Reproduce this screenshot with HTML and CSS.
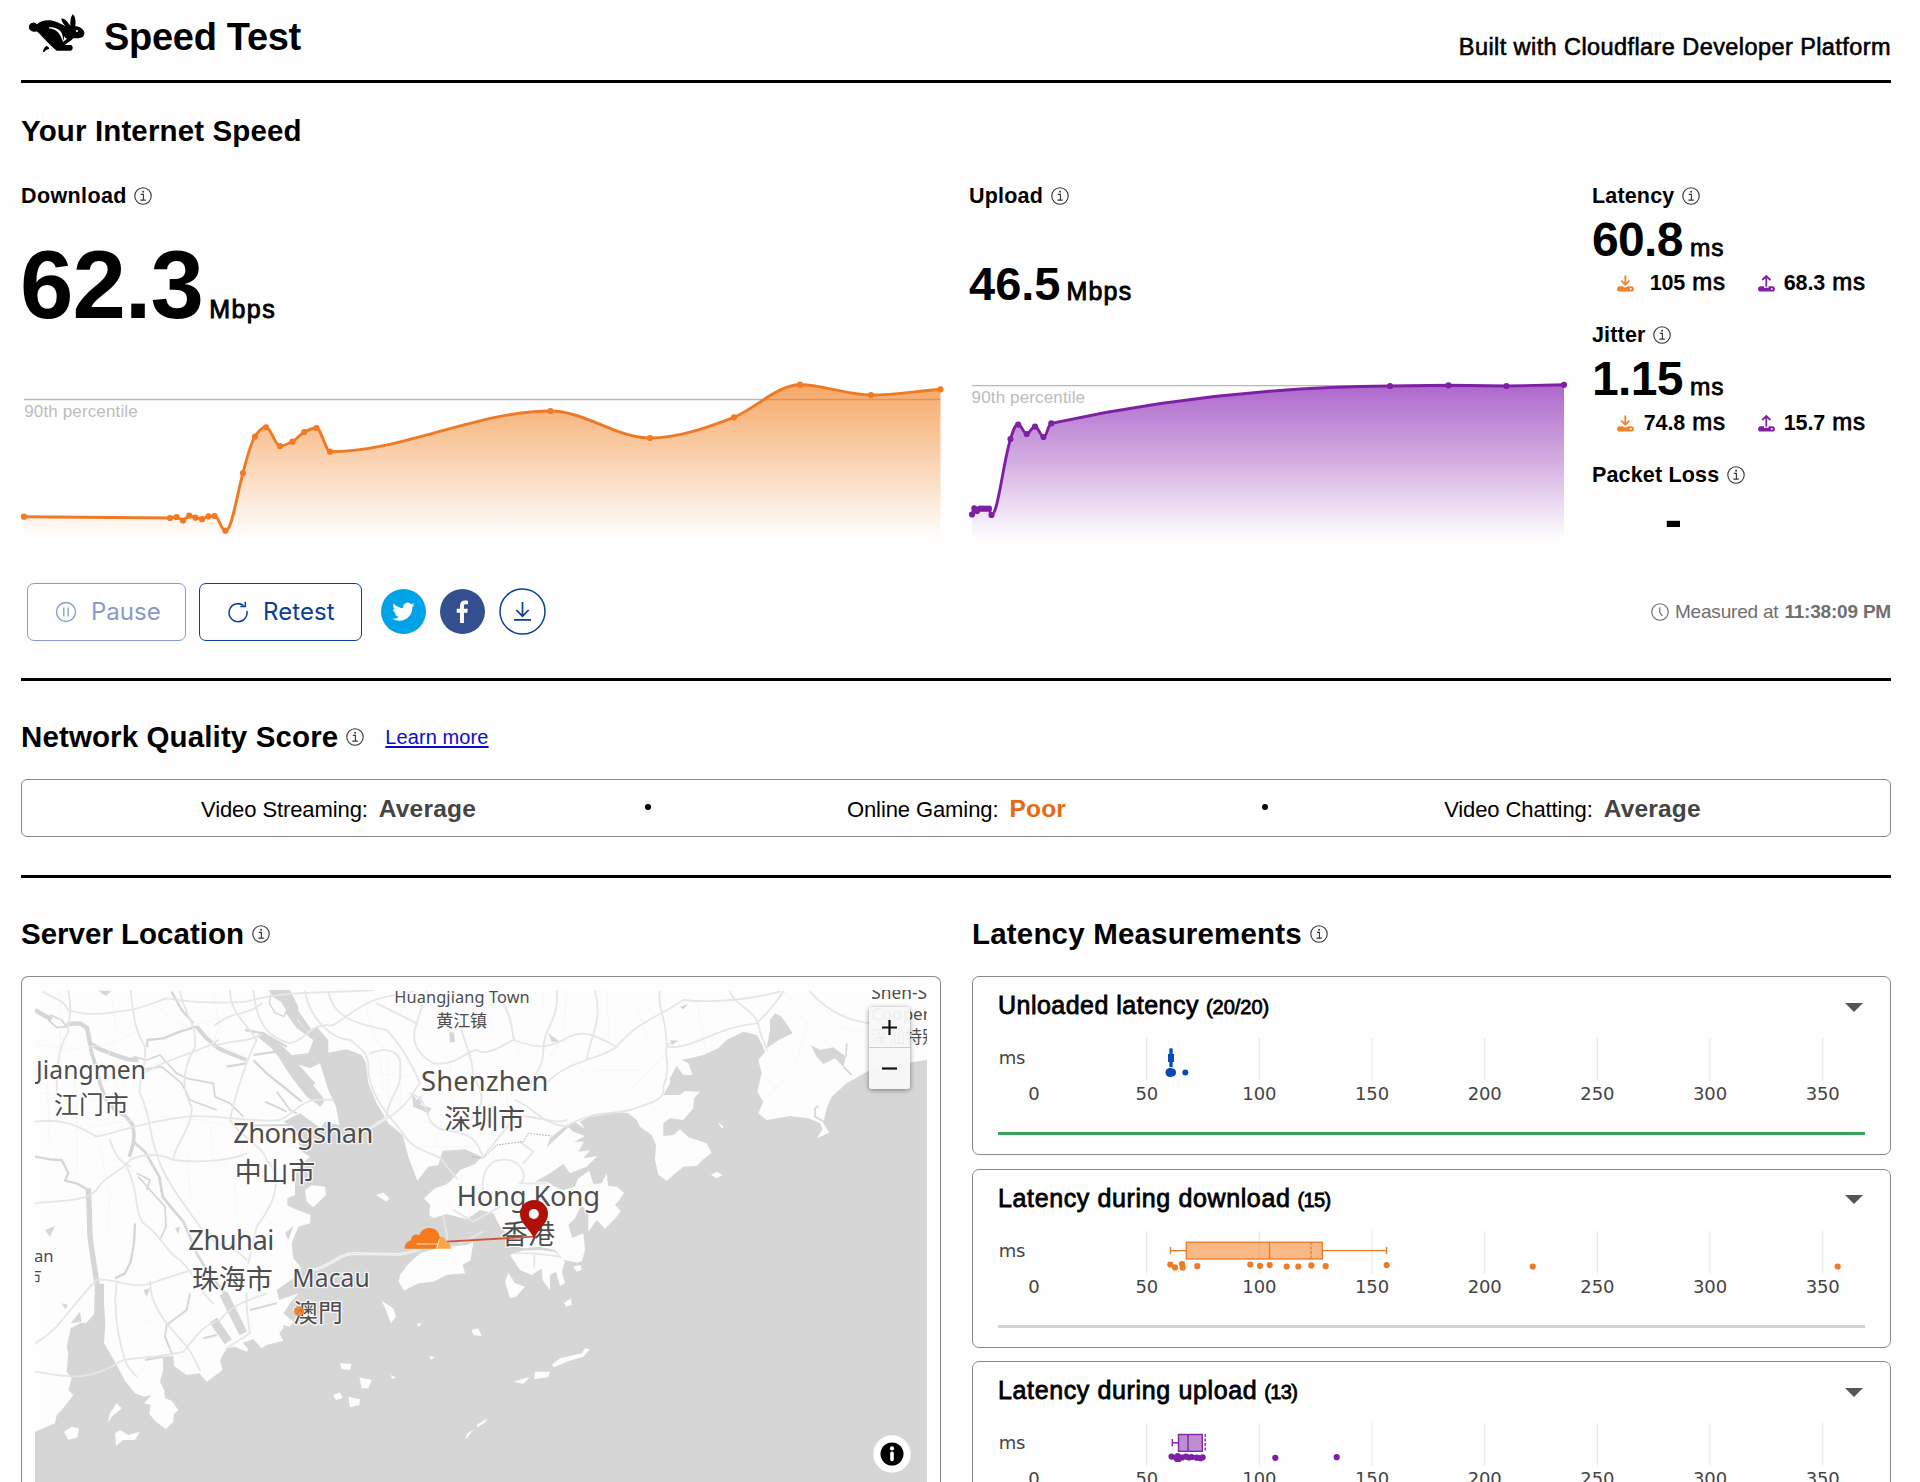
FILE: index.html
```html
<!DOCTYPE html>
<html lang="en">
<head>
<meta charset="utf-8">
<title>Speed Test</title>
<link rel="stylesheet" href="styles.css">
</head>
<body>
<svg class="defs" width="0" height="0" aria-hidden="true">
  <symbol id="i-info" viewBox="0 0 18 18"><g fill="none" stroke="#333" stroke-width="1.1"><circle cx="9" cy="9" r="8.2"/><path d="M6.8 7.4h2.6v5.6M6.4 13.1h5.4" stroke-width="1.1"/></g><circle cx="9.1" cy="4.7" r=".95" fill="#333"/></symbol>
  <symbol id="i-down" viewBox="0 0 17 17"><path d="M8.3 .4v9M4.200 5.700l4.100 4 4.100-4" fill="none" stroke="currentColor" stroke-width="1.800"/><path d="M2.800 11.200h3.200c.8 1.600 3.800 1.600 4.600 0h3.600a2.700 2.700 0 0 1 0 5.400H2.800a2.700 2.700 0 0 1 0-5.400z" fill="currentColor"/><circle cx="13.800" cy="13.900" r=".9" fill="#fff"/></symbol>
  <symbol id="i-up" viewBox="0 0 17 17"><path d="M8.300 11.800V1.400M4.200 5l4.100-4 4.100 4" fill="none" stroke="currentColor" stroke-width="1.800"/><path d="M2.800 11.200h3.200v1.600h4.600v-1.600h3.600a2.700 2.700 0 0 1 0 5.400H2.800a2.700 2.700 0 0 1 0-5.400z" fill="currentColor"/><circle cx="13.800" cy="13.900" r=".9" fill="#fff"/></symbol>
</svg>
<div class="page">
  <header class="top">
    <div class="brand">
      <svg class="rabbit" width="60" height="42" viewBox="24 22 180 126"><path d="M27 67a13.500 13.500 0 0 1 24-11C62 44 80 42 98 45C112 48 122 54 137 62C130 55 124 46 124 39C134 36 146 52 151 61C150 48 152 34 158 26C167 32 168 50 166 62C178 62 190 70 193 80C194 92 186 97 176 98L160 98C153 106 142 112 134 118L152 118C160 119 160 134 152 135L110 135C100 128 80 108 60 86L50 77C42 81 29 77 27 67z"/><path d="M69 139C69 131 74 123 80 121C84 122 87 126 88 130C82 131 76 134 73 139z"/><path d="M87 65C103 63 121 72 125 82C129 90 129 98 129 106C124 98 122 88 115 81C107 73 97 69 87 68z" fill="#fff"/><path d="M132 91C133 99 130 104 127 107L130 108L141 99C137 98 134 95 132 91z" fill="#fff"/><circle cx="171" cy="76" r="3.200" fill="#fff"/></svg>
      <h1>Speed Test</h1>
    </div>
    <div class="built">Built with Cloudflare Developer Platform</div>
  </header>

  <section class="speed">
    <h2 class="h2-speed">Your Internet Speed</h2>
    <div class="metrics">
      <div class="col">
        <div class="label"><span class="w4">Download</span><svg class="info"><use href="#i-info"/></svg></div>
        <div class="value value-dl"><b>62.3</b><span class="mbps">Mbps</span></div>
        <svg class="chart" width="925" height="180" viewBox="21 360 925 180">
          <defs><linearGradient id="go" gradientUnits="userSpaceOnUse" x1="0" y1="384" x2="0" y2="538"><stop offset="0" stop-color="#f38020" stop-opacity=".68"/><stop offset="1" stop-color="#f38020" stop-opacity="0"/></linearGradient></defs>
          <path d="M24 399.500H940.500" stroke="#b8b8b8" stroke-width="1.300"/>
          <text x="24.200" y="417" class="pct">90th percentile</text>
          <path fill="url(#go)" d="M24 516.700L170 518 176.500 517 183 520.500 189.300 515.700 195.500 517.700 202 519.200 208.500 516.300 214.500 516C219 516 221 530.700 225.500 530.700C232 530.700 237 494 243 473C247 457 251 443 255 436.700C259 430 262 427.300 266 427.300C271 427.300 275 446 280 446C284 446 288 443.500 292.500 441.700C297 439 300 434 304.300 432C308 430 312 428 316.500 428C321 428 326 451.700 330 451.700C403 451.700 477 411 550.500 411C584 411 617 438 650 438C678 438 706 428 734 417.300C756 408 778 384.700 800 384.700C824 384.700 847 395 871 395C894 395 917 391 940.500 389.300V540H24z"/>
          <path fill="none" stroke="#ee7a26" stroke-width="2.900" stroke-linejoin="round" d="M24 516.700L170 518 176.500 517 183 520.500 189.300 515.700 195.500 517.700 202 519.200 208.500 516.300 214.500 516C219 516 221 530.700 225.500 530.700C232 530.700 237 494 243 473C247 457 251 443 255 436.700C259 430 262 427.300 266 427.300C271 427.300 275 446 280 446C284 446 288 443.500 292.500 441.700C297 439 300 434 304.300 432C308 430 312 428 316.500 428C321 428 326 451.700 330 451.700C403 451.700 477 411 550.500 411C584 411 617 438 650 438C678 438 706 428 734 417.300C756 408 778 384.700 800 384.700C824 384.700 847 395 871 395C894 395 917 391 940.500 389.300"/>
          <path class="dots" stroke="#f37a20" d="M24 516.700h0M170 518h0M176.500 517h0M183 520.500h0M189.300 515.700h0M195.500 517.700h0M202 519.200h0M208.500 516.300h0M214.500 516h0M225.500 530.700h0M243 473h0M255 436.700h0M266 427.300h0M280 446h0M292.500 441.700h0M304.300 432h0M316.500 428h0M330 451.700h0M550.500 411h0M650 438h0M734 417.300h0M800 384.700h0M871 395h0M940.500 389.300h0"/>
        </svg>
      </div>
      <div class="col">
        <div class="label"><span class="w3">Upload</span><svg class="info"><use href="#i-info"/></svg></div>
        <div class="value value-ul"><b>46.5</b><span class="mbps">Mbps</span></div>
        <svg class="chart" width="604" height="180" viewBox="969 360 604 180">
          <defs><linearGradient id="gp" gradientUnits="userSpaceOnUse" x1="0" y1="385" x2="0" y2="540"><stop offset="0" stop-color="#8419b3" stop-opacity=".66"/><stop offset=".5" stop-color="#8a22b0" stop-opacity=".36"/><stop offset="1" stop-color="#8a2cb0" stop-opacity="0"/></linearGradient></defs>
          <path d="M972 385.700H1564" stroke="#b8b8b8" stroke-width="1.300"/>
          <text x="971.600" y="403" class="pct">90th percentile</text>
          <path fill="url(#gp)" d="M972 514.500L974 508 977 511 980 508.700H989C990 509 990 515 991.500 515C998 515 1003 463 1010.500 439C1013 431 1015 424.300 1018.200 424.300C1021 424.300 1024 434 1026.700 434C1029 434 1032 426.500 1035 426.500C1038 426.500 1041 437 1043.500 437C1047 437 1048 424 1051.300 423.300C1146 403 1260 387 1390 386L1448.500 385.300 1506.500 386 1564 384.800V540H972z"/>
          <path fill="none" stroke="#7f20a4" stroke-width="2.900" stroke-linejoin="round" d="M972 514.500L974 508 977 511 980 508.700H989C990 509 990 515 991.500 515C998 515 1003 463 1010.500 439C1013 431 1015 424.300 1018.200 424.300C1021 424.300 1024 434 1026.700 434C1029 434 1032 426.500 1035 426.500C1038 426.500 1041 437 1043.500 437C1047 437 1048 424 1051.300 423.300C1146 403 1260 387 1390 386L1448.500 385.300 1506.500 386 1564 384.800"/>
          <path class="dots" stroke="#7f20a4" d="M972 514.500h0M974.300 508.300h0M977 511h0M980 508.700h0M983 508.700h0M986 508.700h0M989 508.700h0M991.500 515h0M1010.500 439h0M1018.200 424.600h0M1026.700 434h0M1035 426.500h0M1043.500 437h0M1051.300 423.300h0M1390 386h0M1448.500 385.300h0M1506.500 386h0M1564 384.800h0"/>
        </svg>
      </div>
      <div class="col side">
        <div class="stat">
          <div class="label"><span>Latency</span><svg class="info"><use href="#i-info"/></svg></div>
          <div class="big"><b>60.8</b><span class="ms">ms</span></div>
          <div class="sub"><div class="cell"><svg class="dir dl"><use href="#i-down"/></svg><span><b>105</b><span class="ms">ms</span></span></div><div class="cell"><svg class="dir ul"><use href="#i-up"/></svg><span><b>68.3</b><span class="ms">ms</span></span></div></div>
        </div>
        <div class="stat">
          <div class="label"><span>Jitter</span><svg class="info"><use href="#i-info"/></svg></div>
          <div class="big"><b>1.15</b><span class="ms">ms</span></div>
          <div class="sub"><div class="cell"><svg class="dir dl"><use href="#i-down"/></svg><span><b>74.8</b><span class="ms">ms</span></span></div><div class="cell"><svg class="dir ul"><use href="#i-up"/></svg><span><b>15.7</b><span class="ms">ms</span></span></div></div>
        </div>
        <div class="stat">
          <div class="label"><span>Packet Loss</span><svg class="info"><use href="#i-info"/></svg></div>
          <div class="dash">-</div>
        </div>
      </div>
    </div>
    <div class="actions">
      <button class="btn pause"><svg width="22" height="22" viewBox="0 0 22 22" fill="none" stroke="currentColor" stroke-width="1.300"><circle cx="11" cy="11" r="9.500"/><path d="M8.800 6.500v9M13.200 6.500v9"/></svg><span>Pause</span></button>
      <button class="btn retest"><svg width="22" height="22" viewBox="0 0 22 22" fill="none" stroke="currentColor" stroke-width="1.500"><path d="M16.500 4.500A9 9 0 1 0 19.900 10"/><path d="M18.300 .8v4.800h-5"/></svg><span>Retest</span></button>
      <svg class="round tw" width="45" height="45" viewBox="0 0 45 45"><circle cx="22.500" cy="22.500" r="22.500" fill="#00a2e8"/><g transform="translate(11.300 11.500) scale(.93)"><path fill="#fff" d="M23.950 4.570a10 10 0 0 1-2.820.770 4.960 4.960 0 0 0 2.160-2.720c-.950.550-2 .950-3.130 1.190a4.920 4.920 0 0 0-8.380 4.480C7.690 8.090 4.070 6.130 1.640 3.160a4.820 4.820 0 0 0-.670 2.480c0 1.710.870 3.210 2.190 4.100a4.900 4.900 0 0 1-2.230-.620v.060a4.920 4.920 0 0 0 3.950 4.830 5 5 0 0 1-2.210.080 4.940 4.940 0 0 0 4.600 3.420A9.870 9.870 0 0 1 0 19.540a14 14 0 0 0 7.550 2.210c9.050 0 14-7.500 14-13.980 0-.210 0-.420-.020-.630a9.940 9.940 0 0 0 2.460-2.550z"/></g></svg>
      <svg class="round fb" width="45" height="45" viewBox="0 0 45 45"><circle cx="22.500" cy="22.500" r="22.500" fill="#334f8d"/><path fill="#fff" d="M20 34V23.700h-3.300v-4H20v-2.900c0-3.400 2-5.200 5-5.200 1.400 0 2.700.1 3 .2v3.500h-2.100c-1.700 0-2 .8-2 1.900v2.500h3.900l-.5 4H24V34z"/></svg>
      <svg class="round dn" width="47" height="47" viewBox="0 0 47 47" fill="none" stroke="#0a3f93" stroke-width="1.500"><circle cx="23.500" cy="23.500" r="22.500"/><path d="M23.500 14v13.500M17.300 22l6.200 6.200 6.200-6.200M15 31.800h17" stroke-width="1.700"/></svg>
      <div class="measured"><svg width="18" height="18" viewBox="0 0 18 18" fill="none" stroke="#666" stroke-width="1.100"><circle cx="9" cy="9" r="8.200"/><path d="M8.800 4.200v5.300l2.600 3.500"/></svg><span>Measured at</span><b>11:38:09 PM</b></div>
    </div>
  </section>

  <section class="quality">
    <h2><span class="h2-nq">Network Quality Score</span><svg class="info"><use href="#i-info"/></svg><a href="#">Learn more</a></h2>
    <div class="scores">
      <div class="score s1"><span>Video Streaming:</span><b>Average</b></div><i></i>
      <div class="score s2"><span>Online Gaming:</span><b class="poor">Poor</b></div><i></i>
      <div class="score s3"><span>Video Chatting:</span><b>Average</b></div>
    </div>
  </section>

  <section class="details">
    <div class="left">
      <h2><span>Server Location</span><svg class="info"><use href="#i-info"/></svg></h2>
      <div class="mapcard">
        <svg class="map" width="892" height="492" viewBox="105 90 2676 1476">
          <rect x="105" y="90" width="2676" height="1476" fill="#d6d6d6"/>
          <g fill="#fdfdfd">
            <path d="M105 90V1415L165 1390 170 1365 185 1350 220 1305 205 1290 215 1255 200 1235 205 1180 200 1160 212 1105 240 1090 260 1088 282 1062 285 970 312 972 312 1030 316 1090 312 1150 330 1180 350 1215 375 1262 405 1300 432 1310 455 1305 432 1330 452 1335 448 1362 468 1385 498 1408 520 1385 522 1362 535 1350 515 1322 495 1315 492 1290 480 1265 490 1230 488 1190 520 1188 522 1218 560 1245 598 1240 620 1265 668 1230 660 1200 680 1165 705 1160 740 1175 745 1168 728 1148 760 1138 785 1165 800 1155 850 1142 838 1120 850 1105 850 1095 870 1100 880 1085 850 1060 870 1030 895 1000 838 1020 830 990 880 955 905 925 880 895 875 850 895 800 930 790 932 765 880 745 862 735 862 715 885 705 885 680 890 625 930 590 905 575 880 500 850 485 900 460 962 505 975 485 1018 495 1008 440 985 390 960 310 930 325 890 312 935 370 975 420 962 440 920 410 870 345 835 290 815 265 770 228 790 215 840 252 875 285 925 280 940 240 890 205 858 160 805 90H870L895 140 892 180 920 215 950 200 985 240 985 278 1040 268 1085 285 1098 310 1105 370 1130 430 1165 490 1208 525 1225 590 1252 662 1285 620 1315 615 1328 572 1395 568 1445 590 1425 612 1380 630 1350 665 1335 675 1305 685 1272 715 1290 735 1288 765 1300 775 1340 762 1400 778 1440 750 1480 760 1500 800 1540 840 1570 865 1620 860 1665 870 1690 900 1735 908 1752 880 1722 850 1705 795 1725 775 1745 735 1765 760 1765 815 1790 780 1815 806 1850 770 1862 752 1845 735 1862 715 1872 698 1850 680 1825 678 1820 640 1805 670 1780 672 1768 632 1735 655 1725 680 1690 690 1665 680 1640 665 1605 665 1650 640 1690 612 1710 640 1760 620 1792 588 1750 595 1770 570 1735 575 1752 545 1722 545 1755 528 1720 515 1705 502 1680 525 1640 562 1650 535 1700 495 1725 485 1755 508 1740 485 1780 463 1840 455 1885 460 1910 480 1920 500 1955 525 1968 555 1965 600 1975 645 2000 662 2050 620 2090 618 2110 598 2135 578 2120 550 2065 532 2040 508 2020 525 1990 528 1990 490 2010 475 2050 480 2080 445 2082 415 2100 395 2055 393 2040 405 1990 405 2010 370 2010 355 2030 318 2050 345 2078 345 2065 310 2045 300 2110 285 2155 265 2180 240 2230 215 2270 225 2285 250 2295 275 2275 300 2285 340 2272 395 2290 425 2275 460 2300 480 2370 468 2425 475 2460 490 2468 508 2450 535 2488 518 2470 490 2480 445 2495 410 2540 370 2610 330 2700 312 2781 300V90z"/>
            <path d="M1200 945L1225 912 1260 880 1320 862 1400 855 1420 845 1412 900 1388 915 1395 940 1340 945 1300 965 1255 970 1212 992 1196 965z"/>
            <path d="M1530 885L1565 872 1620 870 1665 875 1695 905 1686 935 1695 970 1680 978 1668 935 1650 945 1650 992 1628 960 1625 925 1595 945 1560 930z"/>
            <path d="M1515 965L1525 938 1545 970 1575 980 1548 1010 1530 1015z"/>
            <path d="M915 690L935 676 975 680 978 705 940 742 920 725zM1128 705L1150 698 1168 715 1160 725zM1145 1022L1180 1045 1188 1070 1172 1090 1158 1050zM1020 1210L1055 1212 1050 1230 1025 1228zM1078 1252L1115 1260 1105 1285 1085 1285zM1000 1305L1020 1297 1028 1315 1008 1320zM1045 1310L1080 1318 1078 1335 1050 1342zM1250 1092L1265 1088 1258 1100zM1288 1188L1305 1192 1292 1200zM1173 1245L1188 1252 1176 1258zM192 1415L215 1400 237 1405 232 1432 205 1440zM345 1420L360 1410 385 1425 420 1415 405 1440 370 1440 348 1458zM350 1330L365 1345 335 1370 322 1390 330 1360zM1692 1030L1712 1015 1715 1035 1698 1040zM1720 920L1742 915 1745 930 1730 935zM1415 1110L1435 1105 1445 1128 1420 1125zM1395 1438L1402 1420 1420 1410 1400 1435zM1430 1395L1462 1375 1455 1388 1432 1402zM1655 1215L1680 1195 1745 1180 1755 1165 1770 1168 1750 1190 1700 1205 1662 1222zM1602 1258L1605 1235 1650 1235 1645 1252zM1540 1265L1590 1250 1570 1272zM2133 645L2150 635 2168 645 2150 655zM2152 485L2172 500 2165 505zM1680 850L1750 820 1755 870 1745 905 1710 900z"/>
          </g>
          <g fill="none" stroke="#d6d6d6" stroke-linejoin="round">
            <path stroke-width="13" d="M105 150L130 165 155 178 M200 192L240 190 262 205 270 250 300 268 345 285 385 298 415 300"/>
            <path stroke-width="5" d="M150 165L185 180 200 200 170 202 145 180"/>
            <path stroke-width="11" d="M268 240L275 280 288 320 300 370 318 420 345 450 378 470 398 495 402 520 400 550 388 590"/>
            <path stroke-width="8" d="M400 545L435 575 455 610 478 650 488 710 520 750 550 785 570 830 590 880 620 930 650 970 690 1020"/>
            <path stroke-width="16" d="M265 685L268 760 270 830 280 900 292 980"/>
            <path stroke-width="7" d="M105 590L150 598 185 600 205 640 195 662 230 670 265 690M345 955L375 940 392 905 402 850 405 790"/>
            <path stroke-width="7" d="M442 262V240L490 235 540 215 590 200M735 210L790 220 860 260M515 95L545 150 580 190M680 320L740 310M760 285L830 275M760 300L800 340 850 380 905 425"/>
            <path stroke-width="12" d="M590 200L620 235 655 265 690 280 740 300"/>
            <path stroke-width="5" d="M400 290L440 300 480 285 530 340 560 355 640 370 645 410 690 430 730 470M420 330L485 320 545 370 570 420 650 450M830 395L870 450 890 460M410 640L450 660 440 690M415 650L450 690 495 740 498 800 480 840"/>
            <path stroke-width="26" d="M670 1000L695 1050 730 1120M640 1080L660 1110 685 1145"/>
            <path stroke-width="6" d="M570 1000L560 1050 500 1095 495 1130 515 1180M750 1050L830 1030M610 1135L650 1125M435 1200L490 1190M860 290L940 290M795 425L860 455M750 497L870 495"/>
            <path stroke-width="16" d="M870 130L890 160 940 230M840 265L900 330 940 375"/>
            <path stroke-width="26" d="M1460 790L1400 810 1480 830 1530 850"/>
          </g>
          <path fill="#d6d6d6" d="M2310 180L2325 160 2345 170 2378 220 2340 238 2300 265 2310 210zM2432 255L2460 270 2500 262 2538 290 2530 320 2505 295 2470 312 2450 290zM1235 400L1250 420 1265 405 1262 435 1295 445 1285 460 1240 440zM1348 215L1362 218 1365 245 1350 248zM295 92L335 92 318 108zM1645 220L1680 245 1655 245zM2040 140L2065 132 2050 148zM2010 240L2035 242 2015 255zM135 810L165 798 150 830zM855 820L880 798 865 840zM430 990L450 985 440 1010zM185 1030L205 1035 195 1048zM525 805L540 800 535 822zM240 1055L212 1090 245 1085z"/>
          <path fill="#fdfdfd" stroke="#d6d6d6" stroke-width="4" d="M812 105L845 125 860 150 852 170 825 158 808 130z"/>
          <path fill="none" stroke="#d6d6d6" stroke-width="5" d="M2538 290L2540 250M2530 320L2555 345M2480 490L2445 470 2445 445 2455 438"/>
          <g fill="none" stroke="#f4f4f4" stroke-width="2">
            <path d="M110 250L200 270 340 250 420 210M180 90V330M330 90L350 210 310 330 240 350M200 520L320 490 420 480M230 380V640M300 560L330 700 320 830M470 470L600 480 690 500M560 560L570 700 650 860M640 100L660 200 620 280M880 95L980 170M1090 110L1130 250 1250 330M1140 290L1150 400 1240 460M1200 250V430M1260 560L1440 560M1280 330L1330 470 1300 560M1500 100L1560 290 1490 380M1700 90L1690 230 1580 400M1820 90L1830 270 1690 330M2000 280L1890 390M2090 120L2120 280M2350 90L2420 190 2380 340 2290 420M2440 110L2520 200 2600 220M1410 460L1560 520M1420 500L1560 440M1460 390L1480 570M1520 400L1530 560M380 1050L480 1100 580 1210M1620 600L1680 550M1980 555L2040 620"/>
            <path d="M120 400L380 430M140 330L150 560M420 110L560 200 720 160M440 450L520 560M630 490L640 600 740 650M700 620L710 780M1110 340L1230 350M1120 400L1210 420M1160 280L1170 460M1260 480L1440 530M1350 310L1360 470M1440 110L1480 220M1570 110L1640 160M1730 130L1800 210M1900 120L1950 250M1780 330L1920 330M2130 130L2200 180M2300 360L2400 440M480 1150L560 1200M340 620L430 640M860 560L910 560M870 600L910 598"/>
          </g>
          <g fill="none" stroke="#e6e6e6" stroke-width="5.500" stroke-linejoin="round" stroke-linecap="round">
            <path d="M130 95C170 120 190 120 205 150C260 170 330 160 350 155C420 150 450 130 500 115C600 130 680 130 740 125C850 90 1000 100 1120 90"/>
            <path d="M205 90C220 160 200 200 205 215C170 270 170 330 170 400M392 90C400 180 410 220 435 260C440 330 410 380 420 400C460 490 440 500 470 580C490 660 560 740 600 800C640 870 700 850 740 900"/>
            <path d="M105 485C180 475 220 490 290 530C350 520 400 490 560 470C640 460 760 490 840 480C900 450 900 410 1000 420"/>
            <path d="M690 90C690 160 740 190 770 240C730 320 700 430 690 480C720 530 790 560 800 600C850 650 830 720 770 800L745 910"/>
            <path d="M540 95C560 180 590 190 585 260C540 340 550 400 575 440C580 500 520 560 520 600C600 610 700 600 740 580M430 340C530 280 600 280 655 240"/>
            <path d="M760 90C770 190 800 230 870 250C920 240 920 200 980 195C1010 210 1060 130 1160 110L1240 95M785 225C730 250 680 240 640 260M645 195C700 150 740 170 785 130"/>
            <path d="M915 95C930 180 1000 240 1050 240C1090 270 1100 280 1105 310C1100 390 1150 450 1210 520C1240 580 1320 580 1325 600L1370 655"/>
            <path d="M985 95C1000 170 1060 190 1160 210C1200 250 1240 320 1260 370C1230 400 1240 440 1100 510M1110 280C1160 260 1210 270 1200 330C1210 380 1160 420 1160 470"/>
            <path d="M1130 130C1190 160 1210 170 1250 190C1230 240 1250 280 1300 310C1370 320 1400 270 1430 270C1460 290 1500 260 1540 240C1600 260 1630 270 1690 240C1750 200 1790 230 1850 260"/>
            <path d="M1250 190L1280 95M1380 180C1380 230 1420 280 1420 350C1450 400 1460 430 1410 480M1230 400C1300 420 1260 490 1330 510C1440 520 1430 560 1450 590L1530 490C1560 440 1650 500 1700 480"/>
            <path d="M1510 130C1550 200 1530 230 1545 240M1670 90C1680 180 1630 200 1630 270C1630 330 1600 340 1590 380M1785 95C1810 180 1770 230 1760 300M1545 420C1600 440 1620 490 1700 500C1750 460 1850 460 1890 450C1950 430 2000 420 1990 380C2020 310 1980 270 2010 250"/>
            <path d="M1640 370C1700 300 1800 300 1850 260C1920 180 1960 180 2050 120C2150 130 2240 120 2340 95M1980 95C1970 140 2000 170 2000 260C2080 270 2150 200 2270 190C2300 160 2320 140 2350 95M2190 95C2200 130 2260 150 2275 190C2280 230 2300 260 2300 270M2430 95C2460 130 2520 180 2610 190"/>
            <path d="M105 730C170 720 250 730 290 690C320 640 360 640 390 600C430 580 480 580 520 600M380 620C420 700 400 750 430 790C480 820 500 880 540 900C600 960 600 1000 640 1030"/>
            <path d="M105 1150C180 1110 200 1050 290 960C350 950 400 1000 480 960C520 950 560 930 590 930M350 970C340 1050 350 1120 375 1200C380 1220 400 1240 410 1250M450 965C450 1060 540 1130 560 1160C580 1180 590 1220 600 1230"/>
            <path d="M105 1235C200 1250 260 1270 370 1200C430 1190 500 1190 550 1175C590 1130 600 1100 660 1080C700 1030 750 1020 800 1000M680 1165L750 1120C740 1060 740 1040 740 1000M330 540C350 600 370 610 390 620"/>
            <path d="M930 930C990 920 1010 880 1060 880L1200 882 1260 870M1330 770L1345 850M1380 850L1450 815M1450 700C1440 640 1470 600 1500 600C1560 590 1590 650 1560 670L1640 670M1570 610L1600 575 1560 545M1360 750L1420 785 1500 740M1545 880L1605 880 1680 890M1603 885V920"/>
          </g>
          <path d="M940 930C995 920 1015 882 1060 881L1200 883 1250 872M1105 508L1165 470" fill="none" stroke="#f4f4f4" stroke-width="8"/>
          <path d="M940 930C995 920 1015 882 1060 881L1200 883 1250 872M1105 508L1165 470" fill="none" stroke="#e0e0e0" stroke-width="2"/>
          <path d="M1415 590L1450 595 1490 555 1530 550 1570 545 1585 520 1655 528" fill="none" stroke="#aaa" stroke-width="2.500" stroke-dasharray="6 3"/>
          <g class="place">
            <text x="1183" y="128" font-size="49" textLength="406">Huangjiang Town</text>
            <text x="1309" y="200" font-size="51" textLength="152">黄江镇</text>
            <text x="108" y="357" font-size="74" textLength="330">Jiangmen</text>
            <text x="162" y="462" font-size="74" textLength="224">江门市</text>
            <text x="700" y="550" font-size="82" textLength="420">Zhongshan</text>
            <text x="704" y="665" font-size="81" textLength="242">中山市</text>
            <text x="1263" y="392" font-size="82" textLength="382">Shenzhen</text>
            <text x="1333" y="507" font-size="81" textLength="242">深圳市</text>
            <text x="1370" y="738" font-size="82" textLength="430">Hong Kong</text>
            <text x="1503" y="852" font-size="81">香港</text>
            <text x="565" y="871" font-size="82" textLength="258">Zhuhai</text>
            <text x="576" y="986" font-size="81" textLength="242">珠海市</text>
            <text x="877" y="981" font-size="74" textLength="232">Macau</text>
            <text x="880" y="1087" font-size="74">澳門</text>
            <text x="102" y="906" font-size="50">an</text>
            <text x="75" y="970" font-size="50">市</text>
            <text x="2614" y="118" font-size="52">Shen-Shan</text>
            <text x="2614" y="180" font-size="51">Cooperation</text>
            <text x="2613" y="250" font-size="51">深汕特别</text>
          </g>
          <path d="M1340 845L1602 830" stroke="#cf5433" stroke-width="5.500"/>
          <circle cx="897" cy="1054" r="15" fill="#f0812a" opacity=".9"/><path d="M890 1062l13-15M899 1046l5 2-1 8" stroke="#b85a10" stroke-width="2" fill="none"/>
          <path fill="#fba445" d="M1312 830C1330 828 1338 838 1339 846C1348 848 1353 856 1352 866H1308z"/>
          <path fill="#f6791e" d="M1214 866C1214 852 1222 843 1234 841C1232 828 1246 819 1258 826C1264 810 1276 803 1290 804C1308 806 1320 818 1319 834L1310 866z"/>
          <path d="M1250 852H1312M1318 838L1310 866" stroke="#ffe3c8" stroke-width="3.500"/>
          <path fill="#b11009" d="M1602 836C1590 806 1560 792 1560 762A42 42 0 0 1 1644 762C1644 792 1614 806 1602 836z"/><circle cx="1601.500" cy="762" r="15" fill="#fff"/>
        </svg>
        <div class="zoom"><div><svg width="15" height="15"><path d="M7.500 0v15M0 7.500h15" stroke="#111" stroke-width="2.200"/></svg></div><div><svg width="15" height="15"><path d="M0 7.500h15" stroke="#111" stroke-width="2.200"/></svg></div></div>
        <svg class="attrib" width="38" height="38" viewBox="0 0 38 38"><circle cx="19" cy="19" r="18.700" fill="#fff"/><circle cx="19" cy="19" r="11.500" fill="#000"/><path d="M19 18.200v6.300" stroke="#fff" stroke-width="3.600" stroke-linecap="round"/><circle cx="19" cy="13.400" r="2.100" fill="#fff"/></svg>
      </div>
    </div>

    <div class="right">
      <h2><span class="h2-lm">Latency Measurements</span><svg class="info"><use href="#i-info"/></svg></h2>
      <div class="cards">
        <article class="card">
          <div class="ctitle"><span class="t1">Unloaded latency</span><small>(20/20)</small><svg class="caret" width="18" height="9"><path d="M0 0h18L9 9z" fill="#555"/></svg></div>
          <svg class="plot" width="868" height="72" viewBox="998 1035 868 72">
            <path class="grid" d="M1146.700 1039v42.500M1259.300 1039v42.500M1372 1039v42.500M1484.600 1039v42.500M1597.300 1039v42.500M1710 1039v42.500M1822.600 1039v42.500"/>
            <g class="ticks"><text x="1034" y="1101">0</text><text x="1146.700" y="1101">50</text><text x="1259.300" y="1101">100</text><text x="1372" y="1101">150</text><text x="1484.600" y="1101">200</text><text x="1597.300" y="1101">250</text><text x="1710" y="1101">300</text><text x="1822.600" y="1101">350</text><text x="1012" y="1064.600">ms</text></g>
            <path d="M1171 1049.300v18.900" stroke="#0a49b4" stroke-width="3.300"/><rect x="1168" y="1055" width="6" height="8" fill="#0a49b4"/>
            <circle cx="1170" cy="1073.500" r="4.500" fill="#0a49b4"/><circle cx="1172" cy="1073.500" r="4" fill="#0a49b4"/><circle cx="1185.300" cy="1073.500" r="3" fill="#0a49b4"/>
          </svg>
          <div class="bar done"></div>
        </article>
        <article class="card">
          <div class="ctitle"><span class="t2">Latency during download</span><small class="s">(15)</small><svg class="caret" width="18" height="9"><path d="M0 0h18L9 9z" fill="#555"/></svg></div>
          <svg class="plot" width="868" height="72" viewBox="998 1035 868 72">
            <path class="grid" d="M1146.700 1039v42.500M1259.300 1039v42.500M1372 1039v42.500M1484.600 1039v42.500M1597.300 1039v42.500M1710 1039v42.500M1822.600 1039v42.500"/>
            <g class="ticks"><text x="1034" y="1101">0</text><text x="1146.700" y="1101">50</text><text x="1259.300" y="1101">100</text><text x="1372" y="1101">150</text><text x="1484.600" y="1101">200</text><text x="1597.300" y="1101">250</text><text x="1710" y="1101">300</text><text x="1822.600" y="1101">350</text><text x="1012" y="1064.600">ms</text></g>
            <g stroke="#ee7a26" stroke-width="1.300" fill="none"><rect x="1186.300" y="1050.200" width="136" height="16.800" fill="#f38020" fill-opacity=".55"/><path d="M1269.500 1050v17M1170.500 1058.600H1186M1322 1058.600H1386.600M1170.500 1055v7.300M1386.600 1055v7.300"/><path d="M1311 1050v17" stroke-dasharray="3 1.500"/></g>
            <path class="dots" stroke="#ee7a26" d="M1170.300 1072.500h0M1175 1075.400h0M1182 1072h0M1182.700 1075.600h0M1197.300 1074.200h0M1250.300 1072.500h0M1260 1073.800h0M1269.700 1073.100h0M1286.700 1074.500h0M1298.300 1074.500h0M1311.300 1073.400h0M1325.700 1074.200h0M1386.700 1073h0M1532.700 1074.500h0M1837.700 1074.500h0"/>
          </svg>
          <div class="bar"></div>
        </article>
        <article class="card">
          <div class="ctitle"><span class="t2">Latency during upload</span><small class="s">(13)</small><svg class="caret" width="18" height="9"><path d="M0 0h18L9 9z" fill="#555"/></svg></div>
          <svg class="plot" width="868" height="72" viewBox="998 1035 868 72">
            <path class="grid" d="M1146.700 1039v42.500M1259.300 1039v42.500M1372 1039v42.500M1484.600 1039v42.500M1597.300 1039v42.500M1710 1039v42.500M1822.600 1039v42.500"/>
            <g class="ticks"><text x="1034" y="1101">0</text><text x="1146.700" y="1101">50</text><text x="1259.300" y="1101">100</text><text x="1372" y="1101">150</text><text x="1484.600" y="1101">200</text><text x="1597.300" y="1101">250</text><text x="1710" y="1101">300</text><text x="1822.600" y="1101">350</text><text x="1012" y="1064.600">ms</text></g>
            <g stroke="#8426a6" stroke-width="1.400" fill="none"><rect x="1178.500" y="1050.500" width="23.800" height="16.800" fill="#7d1fa2" fill-opacity=".5"/><path d="M1188 1050v17M1172.300 1058.800H1178M1172.300 1055v7.500"/><path d="M1205.200 1050v17" stroke-dasharray="3 1.500"/></g>
            <path class="dots" stroke="#7f20a4" d="M1171.500 1072.600h0M1175.700 1073.500h0M1177.700 1072h0M1178.800 1075h0M1177 1075h0M1182 1073.500h0M1186 1072.600h0M1189 1073.500h0M1191.700 1073h0M1196.700 1073.700h0M1200.500 1074.200h0M1202.700 1073.300h0M1275.300 1073.800h0M1336.700 1073.200h0"/>
          </svg>
          <div class="bar"></div>
        </article>
      </div>
    </div>
  </section>
</div>
</body>
</html>
```
FILE: styles.css
```css
* { box-sizing: border-box; }
body { margin: 0; background: #fefefe; color: #000; font-family: "Liberation Sans", Arial, Helvetica, sans-serif; }
.defs { position: absolute; }
svg { display: block; overflow: visible; flex: none; }
.page { height: 1482px; overflow: hidden; padding: 0 29px 0 21px; }
h1, h2 { margin: 0; font-weight: 700; }
h2 { font-size: 29.5px; line-height: 36px; height: 36px; display: flex; align-items: center; white-space: nowrap; }
.info { width: 18px; height: 18px; margin-left: 8px; }
.h2-speed { letter-spacing: .14px; }
.h2-nq { letter-spacing: .12px; }
.h2-lm { letter-spacing: .18px; }

.top { height: 82.500px; border-bottom: 3px solid #000; padding-bottom: 6px; display: flex; justify-content: space-between; align-items: center; }
.brand { display: flex; align-items: center; }
.rabbit { margin: -6px 16px 0 7px; }
h1 { font-size: 38px; line-height: 44px; letter-spacing: -.3px; }
.built { font-size: 23.500px; line-height: 28px; margin-top: 20px; letter-spacing: .42px; -webkit-text-stroke: .6px; }

.speed { height: 598.500px; padding-top: 30px; border-bottom: 3px solid #000; }
.metrics { display: grid; grid-template-columns: 948px 623px 1fr; margin-top: 34px; height: 357px; }
.label { height: 26px; line-height: 26px; font-size: 21.500px; font-weight: 700; display: flex; align-items: center; letter-spacing: .16px; }
.label .w4 { letter-spacing: .38px; }
.label .w3 { letter-spacing: .2px; }
.label .info { margin-left: 7.500px; }
.value { height: 151px; display: flex; align-items: baseline; }
.value-dl { padding-top: 28px; }
.value-ul { padding-top: 51.500px; }
.value-dl b { font-size: 96px; line-height: 96px; letter-spacing: -1px; margin-left: -1px; }
.value-ul b { font-size: 47px; line-height: 48px; }
.mbps { font-size: 25px; line-height: 30px; letter-spacing: 1.400px; -webkit-text-stroke: .9px; margin-left: 6.500px; }
.value-ul .mbps { margin-left: 6px; letter-spacing: 1.200px; }
.pct { font-size: 17px; fill: #bdbdbd; letter-spacing: .14px; }
.dots { stroke-width: 6.200px; stroke-linecap: round; fill: none; }

.stat { height: 139.500px; }
.big { margin-top: 7px; height: 48px; display: flex; align-items: baseline; }
.big b { font-size: 48px; line-height: 48px; letter-spacing: -.64px; }
.ms { font-size: 24.500px; letter-spacing: .9px; -webkit-text-stroke: .8px; margin-left: 7px; }
.sub { margin-top: 7px; padding-left: 25px; display: flex; gap: 32px; line-height: 26px; height: 26px; }
.sub .cell { width: 109px; display: flex; justify-content: space-between; align-items: center; white-space: nowrap; }
.sub .cell + .cell { width: 108px; }
.sub b { font-size: 21.500px; letter-spacing: -.1px; }
.sub .ms { font-size: 24px; }
.dir { width: 17px; height: 17px; }
.dl { color: #f0832e; }
.ul { color: #7f20a4; }
.dash { margin-top: 7px; width: 163px; text-align: center; font-size: 52px; font-weight: 700; line-height: 48px; }

.actions { margin-top: 43px; height: 58px; padding-left: 6px; display: flex; align-items: center; }
.btn { height: 58px; border: 1.500px solid; border-radius: 7px; background: none; padding: 0 0 0 27px; display: flex; align-items: center; font-family: Inter, sans-serif; font-size: 24px; }
.pause { width: 159px; color: #869cc8; margin-right: 13px; }
.retest { width: 163px; color: #0a3f93; letter-spacing: .1px; }
.pause span { margin-left: 14px; }
.retest span { margin-left: 14px; }
.tw { margin-left: 19px; }
.fb { margin-left: 14px; }
.dn { margin-left: 14px; }
.measured { margin-left: auto; display: flex; align-items: center; font-size: 19px; color: #6f6f6f; letter-spacing: -.2px; }
.measured span { margin-left: 6px; }
.measured b { margin-left: 6px; }

.quality { height: 197px; padding-top: 38px; border-bottom: 3px solid #000; }
.quality a { margin-left: 21px; font-size: 20px; font-weight: 400; letter-spacing: .1px; color: #0b0bd0; text-underline-offset: 2px; }
.scores { margin-top: 24px; height: 58px; border: 1px solid #8a8a8a; border-radius: 6px; display: grid; grid-template-columns: 623px 6px 611px 6px 1fr; align-items: center; }
.scores i { width: 6px; height: 6px; border-radius: 50%; background: #000; margin-top: -2px; }
.score { display: flex; justify-content: center; align-items: baseline; font-size: 22px; padding-top: 1px; }
.score span { letter-spacing: -.1px; }
.score b { margin-left: 11px; font-size: 24.500px; letter-spacing: .2px; color: #444; }
.score .poor { color: #e56a14; }
.s1 { padding-left: 10px; }
.s3 { padding-right: 13px; }

.details { padding-top: 38px; display: grid; grid-template-columns: 920px 919px; gap: 31px; }
.mapcard { position: relative; margin-top: 24px; height: 506px; padding: 12.500px 13px 0; border: 1px solid #8a8a8a; border-bottom: 0; border-radius: 7px 7px 0 0; }
.map { overflow: hidden; }
.place { font-family: "Noto Sans", "Noto Sans CJK SC", sans-serif; fill: #4d4d4d; stroke: #fff; stroke-width: 8px; stroke-opacity: .85; paint-order: stroke; stroke-linejoin: round; }
.zoom { position: absolute; left: 846.500px; top: 30px; width: 41px; background: rgba(248,248,248,.94); border-radius: 3px; box-shadow: 0 1px 5px rgba(0,0,0,.45); }
.zoom div { height: 41px; display: flex; align-items: center; justify-content: center; }
.zoom div:first-child { border-bottom: 1px solid #ccc; }
.attrib { position: absolute; left: 851px; top: 458px; }
.cards { margin-top: 24px; display: flex; flex-direction: column; gap: 13.500px; }
.card { height: 179px; border: 1px solid #8a8a8a; border-radius: 7px; padding: 13px 25px 0; }
.ctitle { height: 30px; line-height: 30px; display: flex; align-items: baseline; font-size: 25px; white-space: nowrap; -webkit-text-stroke: .8px; }
.t1 { letter-spacing: .48px; }
.t2 { letter-spacing: .63px; }
.ctitle small { font-size: 20px; margin-left: 7px; }
.ctitle .s { letter-spacing: -.6px; }
.caret { margin: 4px 2px 0 auto; align-self: center; }
.plot { margin-top: 14px; }
.grid { stroke: #ebebeb; stroke-width: 1.400px; }
.ticks { font-family: "DejaVu Sans", sans-serif; font-size: 18px; fill: #444; text-anchor: middle; letter-spacing: -.15px; }
.bar { margin-top: 26px; height: 3px; background: #d2d2d2; }
.done { background: #36a25b; }
```
